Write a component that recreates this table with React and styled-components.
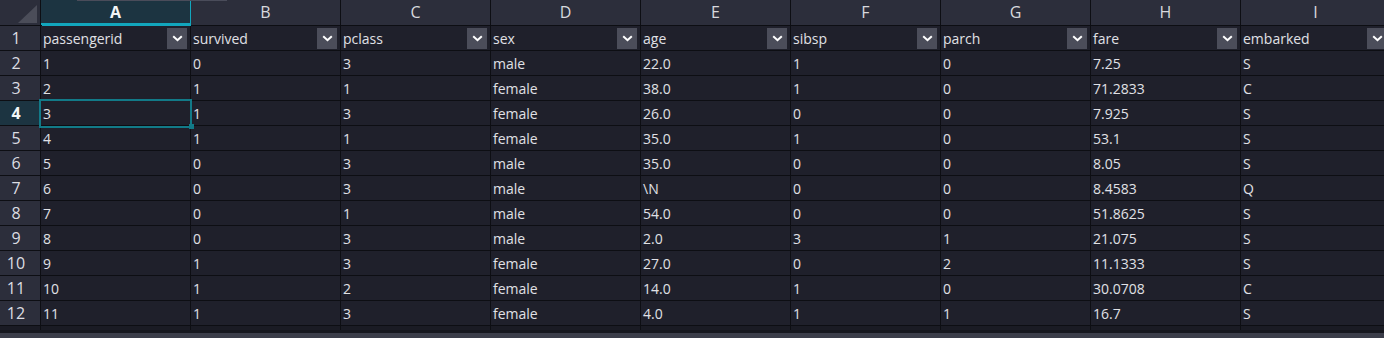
import React from "react";
import styled, { createGlobalStyle } from "styled-components";

const columns = ["A", "B", "C", "D", "E", "F", "G", "H", "I"];
const fields = [
  "passengerid",
  "survived",
  "pclass",
  "sex",
  "age",
  "sibsp",
  "parch",
  "fare",
  "embarked",
];
const rows = [
  ["1", "0", "3", "male", "22.0", "1", "0", "7.25", "S"],
  ["2", "1", "1", "female", "38.0", "1", "0", "71.2833", "C"],
  ["3", "1", "3", "female", "26.0", "0", "0", "7.925", "S"],
  ["4", "1", "1", "female", "35.0", "1", "0", "53.1", "S"],
  ["5", "0", "3", "male", "35.0", "0", "0", "8.05", "S"],
  ["6", "0", "3", "male", "\\N", "0", "0", "8.4583", "Q"],
  ["7", "0", "1", "male", "54.0", "0", "0", "51.8625", "S"],
  ["8", "0", "3", "male", "2.0", "3", "1", "21.075", "S"],
  ["9", "1", "3", "female", "27.0", "0", "2", "11.1333", "S"],
  ["10", "1", "2", "female", "14.0", "1", "0", "30.0708", "C"],
  ["11", "1", "3", "female", "4.0", "1", "1", "16.7", "S"],
];

const activeCol = 0;
const activeRow = 3; // sheet row 4

export default function App() {
  return (
    <>
      <GlobalStyle />
      <Sheet>
        <ScrollHint />
        <Grid>
          <Corner>
            <CornerTriangle />
          </Corner>
          {columns.map((c, i) => (
            <ColHeader key={c} $active={i === activeCol}>
              {c}
            </ColHeader>
          ))}

          <RowHeader>1</RowHeader>
          {fields.map((f) => (
            <FilterCell key={f}>
              <span>{f}</span>
              <FilterButton>
                <svg width="11" height="7" viewBox="0 0 11 7">
                  <polyline
                    points="1.2,1.2 5.5,5.2 9.8,1.2"
                    fill="none"
                    stroke="#fff"
                    strokeWidth="2"
                  />
                </svg>
              </FilterButton>
            </FilterCell>
          ))}

          {rows.map((r, ri) => (
            <React.Fragment key={ri}>
              <RowHeader $active={ri + 1 === activeRow}>{ri + 2}</RowHeader>
              {r.map((v, ci) => (
                <Cell
                  key={ci}
                  $selected={ri + 1 === activeRow && ci === activeCol}
                >
                  {v}
                </Cell>
              ))}
            </React.Fragment>
          ))}

          <Stub />
          {columns.map((c) => (
            <Stub key={c} />
          ))}
        </Grid>
        <Footer>
          <FooterBar />
        </Footer>
      </Sheet>
    </>
  );
}

const GlobalStyle = createGlobalStyle`
  html, body {
    margin: 0;
    padding: 0;
    background: #1e1f2a;
  }
  body {
    font-family: "Open Sans", "Noto Sans", sans-serif;
    overflow: hidden;
  }
`;

const Sheet = styled.div`
  position: relative;
  width: 1384px;
  height: 338px;
  overflow: hidden;
  background: #0d0e13;
`;

const ScrollHint = styled.div`
  position: absolute;
  top: 0;
  left: 77px;
  width: 150px;
  height: 1px;
  background: #4a4c5a;
  z-index: 3;
`;

const Grid = styled.div`
  display: grid;
  grid-template-columns: 40px repeat(9, 149px);
  grid-template-rows: 25px repeat(12, 24px) 4px;
  gap: 1px;
  background: #0d0e13;
  width: 1400px;
`;

const Corner = styled.div`
  position: relative;
  background: #2c2e3b;
`;

const CornerTriangle = styled.div`
  position: absolute;
  right: 3px;
  bottom: 2px;
  width: 19px;
  height: 18px;
  background: #4b4d59;
  clip-path: polygon(100% 0, 100% 100%, 0 100%);
`;

const ColHeader = styled.div`
  display: flex;
  align-items: center;
  justify-content: center;
  background: ${({ $active }) => ($active ? "#1c3441" : "#2c2e3b")};
  color: ${({ $active }) => ($active ? "#f2f5f6" : "#d8d9de")};
  font-size: 16px;
  font-weight: ${({ $active }) => ($active ? 700 : 400)};
  box-shadow: ${({ $active }) =>
    $active ? "inset 0 -2px 0 #12a6bd, 1px 1px 0 #12a6bd" : "none"};
  padding-bottom: 2px;
  box-sizing: border-box;
`;

const RowHeader = styled.div`
  display: flex;
  align-items: center;
  justify-content: center;
  padding-right: 8px;
  box-sizing: border-box;
  background: ${({ $active }) => ($active ? "#1c3441" : "#2c2e3b")};
  color: ${({ $active }) => ($active ? "#f2f5f6" : "#dcdde2")};
  font-size: 16px;
  font-weight: ${({ $active }) => ($active ? 700 : 400)};
`;

const Cell = styled.div`
  position: relative;
  display: flex;
  align-items: center;
  padding: 0 0 0 2px;
  box-sizing: border-box;
  background: #1f202b;
  color: #e0e1e6;
  font-size: 14px;
  white-space: nowrap;
  z-index: ${({ $selected }) => ($selected ? 2 : 0)};

  ${({ $selected }) =>
    $selected &&
    `
    &::before {
      content: "";
      position: absolute;
      left: -2px;
      top: -2px;
      right: -2px;
      bottom: -3px;
      border: 2px solid #127a88;
    }
    &::after {
      content: "";
      position: absolute;
      right: -4px;
      bottom: -4px;
      width: 5px;
      height: 5px;
      background: #127a88;
    }
  `}
`;

const FilterCell = styled(Cell)`
  justify-content: space-between;
  padding-right: 3px;
`;

const FilterButton = styled.div`
  display: flex;
  align-items: center;
  justify-content: center;
  width: 20px;
  height: 21px;
  margin-top: 1px;
  background: #4b4d5a;
`;

const Stub = styled.div`
  background: #1a1b24;
`;

const Footer = styled.div`
  padding-top: 3px;
  background: #16171e;
`;

const FooterBar = styled.div`
  height: 5px;
  background: #3b3d49;
`;
